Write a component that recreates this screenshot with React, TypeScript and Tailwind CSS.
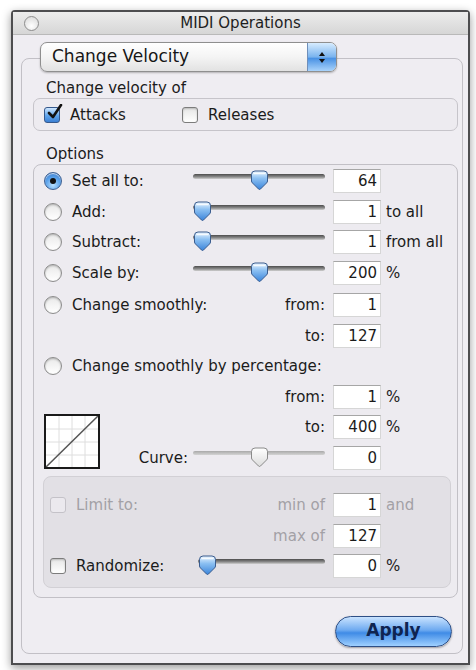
import React from "react";

const TEXT = "text-[15px] leading-[18px] text-[#1b1b1b]";

function Radio({ checked }: { checked?: boolean }) {
  if (checked) {
    return (
      <span className="flex h-[18px] w-[18px] shrink-0 items-center justify-center rounded-full border border-[#3d5f90] bg-[radial-gradient(circle_at_50%_75%,#b9e0ff_0%,#5ba2ea_50%,#2d6dc2_100%)] shadow-[inset_0_1px_1px_rgba(255,255,255,0.8)]">
        <span className="h-[6px] w-[6px] rounded-full bg-[#111]" />
      </span>
    );
  }
  return (
    <span className="h-[18px] w-[18px] shrink-0 rounded-full border border-[#8c8c8c] bg-[linear-gradient(#e9e9e9,#ffffff)] shadow-[inset_0_1px_2px_rgba(0,0,0,0.25)]" />
  );
}

function Checkbox({ checked, disabled }: { checked?: boolean; disabled?: boolean }) {
  if (checked) {
    return (
      <span className="relative h-[16px] w-[16px] shrink-0 rounded-[3px] border border-[#36598c] bg-[linear-gradient(#cfe7ff,#5ea4ec_55%,#3b7fd3)]">
        <svg className="absolute -top-[4px] left-[1px]" width="18" height="17" viewBox="0 0 18 17">
          <path d="M3 9 L7 13 L15 1" fill="none" stroke="#111" strokeWidth="2.6" strokeLinecap="round" strokeLinejoin="round" />
        </svg>
      </span>
    );
  }
  return (
    <span
      className={
        disabled
          ? "h-[16px] w-[16px] shrink-0 rounded-[3px] border border-[#c4c2c8] bg-[#ebe9ee]"
          : "h-[16px] w-[16px] shrink-0 rounded-[3px] border border-[#7c7c7c] bg-[linear-gradient(#e6e6e6,#ffffff)] shadow-[inset_0_1px_2px_rgba(0,0,0,0.2)]"
      }
    />
  );
}

function Thumb({ dim }: { dim?: boolean }) {
  return (
    <svg width="19" height="21" viewBox="0 0 19 21">
      <defs>
        <linearGradient id="thumbBlue" x1="0" y1="0" x2="0" y2="1">
          <stop offset="0" stopColor="#eaf5ff" />
          <stop offset="0.4" stopColor="#8cc0f2" />
          <stop offset="1" stopColor="#3a84da" />
        </linearGradient>
        <linearGradient id="thumbGray" x1="0" y1="0" x2="0" y2="1">
          <stop offset="0" stopColor="#ffffff" />
          <stop offset="1" stopColor="#dcdcdc" />
        </linearGradient>
      </defs>
      <path
        d="M1.5 4.5 Q1.5 1 5 1 H14 Q17.5 1 17.5 4.5 V11 Q17.5 12 16.5 13 L10.5 19 Q9.5 20 8.5 19 L2.5 13 Q1.5 12 1.5 11 Z"
        fill={dim ? "url(#thumbGray)" : "url(#thumbBlue)"}
        stroke={dim ? "#8a8a8a" : "#3a5c8e"}
        strokeWidth="1"
      />
      {!dim && <path d="M4 3.5 H15" stroke="#ffffff" strokeOpacity="0.8" strokeWidth="1.5" strokeLinecap="round" />}
    </svg>
  );
}

function Slider({ width, pos, dim }: { width: number; pos: number; dim?: boolean }) {
  return (
    <div className={`relative h-[24px] shrink-0 ${width === 132 ? "w-[132px]" : "w-[127px]"}`}>
      <div
        className={
          dim
            ? "absolute left-0 right-0 top-[5px] h-[4px] rounded-full bg-[linear-gradient(#a9a9a9,#d4d4d4)]"
            : "absolute left-0 right-0 top-[5px] h-[5px] rounded-full bg-[linear-gradient(#4c4c4c,#8e8e8e_60%,#d0d0d0)]"
        }
      />
      <div className="absolute top-[1px]" style={{ left: pos * (width - 19) }}>
        <Thumb dim={dim} />
      </div>
    </div>
  );
}

function Field({ value }: { value: string }) {
  return (
    <div className="ml-[8px] flex h-[24px] w-[48px] shrink-0 items-center justify-end border border-[#d6d6d6] border-t-[#a6a6a6] bg-white pr-[3px] text-[15px] text-[#1b1b1b]">
      {value}
    </div>
  );
}

function OptionRow({
  label,
  checked,
  pos,
  value,
  suffix,
}: {
  label: string;
  checked?: boolean;
  pos: number;
  value: string;
  suffix?: string;
}) {
  return (
    <div className="flex h-[30.5px] items-center">
      <div className="flex w-[149px] items-center gap-[10px]">
        <Radio checked={checked} />
        <span className={TEXT}>{label}</span>
      </div>
      <Slider width={132} pos={pos} />
      <Field value={value} />
      {suffix && <span className={`ml-[5px] ${TEXT}`}>{suffix}</span>}
    </div>
  );
}

function CurveGraph() {
  return (
    <div className="mt-[2px] h-[55px] w-[56px] shrink-0 border-2 border-[#1a1a1a] bg-white">
      <svg width="52" height="51" viewBox="0 0 52 51">
        {[13, 26, 39].map((v) => (
          <g key={v}>
            <line x1={v} y1="0" x2={v} y2="51" stroke="#dedede" />
            <line x1="0" y1={v} x2="52" y2={v} stroke="#dedede" />
          </g>
        ))}
        <line x1="0" y1="51" x2="52" y2="0" stroke="#555" strokeWidth="1.5" />
      </svg>
    </div>
  );
}

export default function App() {
  return (
    <div className="h-screen bg-white pl-[11px] pt-[10px] font-['DejaVu_Sans',sans-serif]">
      <div className="w-[459px] rounded-t-[4px] border-2 border-[#4d4d4f] bg-[#efedf2] shadow-[0_3px_10px_rgba(0,0,0,0.4)]">
        <div className="relative flex h-[23px] items-center justify-center border-b border-[#b9b9b9] bg-[linear-gradient(#ececec,#d6d6d6)]">
          <span className="absolute left-[11px] top-[4px] h-[15px] w-[15px] rounded-full border border-[#8d8d8d] bg-[radial-gradient(circle_at_50%_70%,#ffffff,#d6d6d6)]" />
          <span className="text-[15px] text-[#1e1e1e]">MIDI Operations</span>
        </div>

        <div className="pb-[9px] pt-[7px]">
          <div className="relative z-10 ml-[27px] flex h-[30px] w-[297px] items-stretch rounded-[7px] border border-[#8f8f8f] bg-[linear-gradient(#ffffff,#f4f4f4_50%,#e2e2e2)] shadow-[0_1px_2px_rgba(0,0,0,0.25)]">
            <span className="flex flex-1 items-center pl-[11px] text-[17px] text-[#161616]">Change Velocity</span>
            <span className="flex w-[29px] flex-col items-center justify-center gap-[3px] rounded-r-[6px] border-l border-[#6f8fba] bg-[linear-gradient(#d7ecff,#79b3ee_50%,#4a92e4_55%,#a9d3fb)]">
              <span className="h-0 w-0 border-x-[3px] border-b-[4px] border-x-transparent border-b-[#111]" />
              <span className="h-0 w-0 border-x-[3px] border-t-[4px] border-x-transparent border-t-[#111]" />
            </span>
          </div>

          <div className="-mt-[14px] ml-[8px] w-[442px] rounded-[8px] border border-[#c2c0c6] pb-[6px] pl-[11px] pr-[4px] pt-[20px]">
            <p className={`ml-[13px] ${TEXT}`}>Change velocity of</p>
            <div className="mt-[1px] flex h-[33px] items-center rounded-[7px] border border-[#c6c4ca] bg-[#edebf0] pl-[10px]">
              <div className="flex w-[138px] items-center gap-[10px]">
                <Checkbox checked />
                <span className={TEXT}>Attacks</span>
              </div>
              <div className="flex items-center gap-[10px]">
                <Checkbox />
                <span className={TEXT}>Releases</span>
              </div>
            </div>

            <p className={`ml-[13px] mt-[14px] ${TEXT}`}>Options</p>
            <div className="mt-[1px] rounded-[8px] border border-[#c2c0c6] bg-[#edebf0] pb-[9px] pl-[10px] pr-[6px] pt-[1px]">
              <OptionRow label="Set all to:" checked pos={0.5} value="64" />
              <OptionRow label="Add:" pos={0} value="1" suffix="to all" />
              <OptionRow label="Subtract:" pos={0} value="1" suffix="from all" />
              <OptionRow label="Scale by:" pos={0.5} value="200" suffix="%" />

              <div className="mt-[2px] flex h-[30.5px] items-center">
                <div className="flex w-[200px] items-center gap-[10px]">
                  <Radio />
                  <span className={TEXT}>Change smoothly:</span>
                </div>
                <span className={`w-[81px] text-right ${TEXT}`}>from:</span>
                <Field value="1" />
              </div>
              <div className="flex h-[30.5px] items-center">
                <span className={`w-[281px] text-right ${TEXT}`}>to:</span>
                <Field value="127" />
              </div>

              <div className="flex h-[30.5px] items-center gap-[10px]">
                <Radio />
                <span className={TEXT}>Change smoothly by percentage:</span>
              </div>
              <div className="flex h-[30.5px] items-center">
                <span className={`w-[281px] text-right ${TEXT}`}>from:</span>
                <Field value="1" />
                <span className={`ml-[5px] ${TEXT}`}>%</span>
              </div>

              <div className="flex">
                <CurveGraph />
                <div>
                  <div className="flex h-[30.5px] items-center">
                    <span className={`w-[225px] text-right ${TEXT}`}>to:</span>
                    <Field value="400" />
                    <span className={`ml-[5px] ${TEXT}`}>%</span>
                  </div>
                  <div className="flex h-[30.5px] items-center">
                    <span className={`w-[93px] pr-[5px] text-right ${TEXT}`}>Curve:</span>
                    <Slider width={132} pos={0.5} dim />
                    <Field value="0" />
                  </div>
                </div>
              </div>

              <div className="-ml-[1px] mt-[3px] rounded-[8px] border border-[#d2d0d5] bg-[#e2e0e5] pb-[5px] pl-[6px] pt-[13px]">
                <div className="flex h-[30.5px] items-center">
                  <div className="flex w-[148px] items-center gap-[10px]">
                    <Checkbox disabled />
                    <span className="text-[15px] leading-[18px] text-[#a3a1a6]">Limit to:</span>
                  </div>
                  <span className="w-[127px] text-right text-[15px] leading-[18px] text-[#a3a1a6]">min of</span>
                  <Field value="1" />
                  <span className="ml-[5px] text-[15px] leading-[18px] text-[#a3a1a6]">and</span>
                </div>
                <div className="flex h-[30.5px] items-center">
                  <span className="w-[275px] text-right text-[15px] leading-[18px] text-[#a3a1a6]">max of</span>
                  <Field value="127" />
                </div>
                <div className="flex h-[30.5px] items-center">
                  <div className="flex w-[148px] items-center gap-[10px]">
                    <Checkbox />
                    <span className={TEXT}>Randomize:</span>
                  </div>
                  <Slider width={127} pos={0} />
                  <Field value="0" />
                  <span className={`ml-[5px] ${TEXT}`}>%</span>
                </div>
              </div>
            </div>

            <div className="mr-[6px] mt-[18px] flex justify-end">
              <button
                type="button"
                className="flex h-[31px] w-[117px] items-center justify-center rounded-full border border-[#2e4f86] bg-[linear-gradient(#c9e3ff,#6eaaf0_45%,#3f8be6_55%,#9fd0ff)] text-[17px] font-bold text-[#0f2450] shadow-[0_1px_2px_rgba(0,0,0,0.35)]"
              >
                Apply
              </button>
            </div>
          </div>
        </div>
      </div>
    </div>
  );
}
